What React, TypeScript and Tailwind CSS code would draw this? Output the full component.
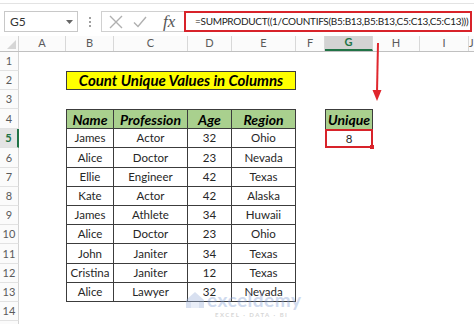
import type { FC, ReactNode } from "react";

const colW = [19, 47, 48, 74, 44, 64, 29, 48, 47, 49];
const colNames = ["A", "B", "C", "D", "E", "F", "G", "H", "I", "J"];
const rowH = [19, 19, 19, 20, 19, 20, 19, 19, 19, 19, 20, 19, 19, 19];

const head = ["Name", "Profession", "Age", "Region"];
const rows = [
  ["James", "Actor", "32", "Ohio"],
  ["Alice", "Doctor", "23", "Nevada"],
  ["Ellie", "Engineer", "42", "Texas"],
  ["Kate", "Actor", "42", "Alaska"],
  ["James", "Athlete", "34", "Huwaii"],
  ["Alice", "Doctor", "23", "Ohio"],
  ["John", "Janiter", "34", "Texas"],
  ["Cristina", "Janiter", "12", "Texas"],
  ["Alice", "Lawyer", "32", "Nevada"],
];

const formula = "=SUMPRODUCT((1/COUNTIFS(B5:B13,B5:B13,C5:C13,C5:C13)))";

const Toolbar: FC = () => (
  <div className="h-[36px] shrink-0">
    <div className="h-[4px] border-b border-[#e3e3e3]" />
    <div className="mt-[7px] flex h-[21px] items-stretch">
      <div className="ml-[4px] flex w-[74px] shrink-0 items-center justify-between border border-[#c8c8c8] pl-[5px] pr-[4px] text-[12px] text-[#333]">
        <span>G5</span>
        <svg width="7" height="4" viewBox="0 0 7 4">
          <path d="M0 0h7L3.5 4z" fill="#666" />
        </svg>
      </div>
      <div className="flex w-[23px] shrink-0 flex-col items-center justify-center gap-[2px]">
        <span className="h-[2px] w-[2px] bg-[#a0a0a0]" />
        <span className="h-[2px] w-[2px] bg-[#a0a0a0]" />
        <span className="h-[2px] w-[2px] bg-[#a0a0a0]" />
      </div>
      <div className="flex w-[83px] shrink-0 items-center border border-r-0 border-[#d0d0d0] pl-[7px]">
        <svg width="14" height="14" viewBox="0 0 14 14">
          <path d="M1 1l12 12M13 1L1 13" stroke="#b0b0b0" strokeWidth="1.4" />
        </svg>
        <svg className="ml-[10px]" width="14" height="12" viewBox="0 0 14 12">
          <path d="M1 6.5l4 4L13 1" stroke="#b0b0b0" strokeWidth="1.4" fill="none" />
        </svg>
        <span className="ml-[16px] font-['Liberation_Serif',serif] text-[17px] italic leading-none text-[#555]">
          fx
        </span>
      </div>
      <div className="mr-[2px] flex min-w-0 flex-1 items-center overflow-hidden whitespace-nowrap border-2 border-[#d8232a] pl-[9px] text-[10px] tracking-[-0.3px] text-[#222]">
        {formula}
      </div>
    </div>
  </div>
);

const ColumnHeader: FC = () => (
  <div className="flex h-[16px] shrink-0 border-b border-[#c0c0c0] bg-[#fbfbfb] text-[11px] text-[#5a5a5a]">
    <div className="relative w-[19px] shrink-0 border-r border-[#d4d4d4]">
      <svg className="absolute bottom-[2px] right-[2px]" width="9" height="9" viewBox="0 0 9 9">
        <path d="M9 0v9H0z" fill="#d6d6d6" />
      </svg>
    </div>
    {colNames.map((n, i) => {
      const sel = n === "G";
      const last = i === colNames.length - 1;
      return (
        <div
          key={n}
          style={last ? undefined : { width: colW[i + 1] ?? 0 }}
          className={
            "flex shrink-0 items-center justify-center border-r border-[#d8d8d8] " +
            (last ? "flex-1 " : "") +
            (sel ? "border-b-2 border-b-[#217346] bg-[#d3d3d3] font-bold text-[#217346]" : "")
          }
        >
          {n}
        </div>
      );
    })}
  </div>
);

const Cell: FC<{ w?: number; className?: string; children?: ReactNode }> = ({ w, className, children }) => (
  <div
    style={w ? { width: w } : undefined}
    className={"flex shrink-0 items-center justify-center " + (w ? "" : "flex-1 ") + (className ?? "")}
  >
    {children}
  </div>
);

const SheetRow: FC<{ r: number }> = ({ r }) => {
  const sel = r === 5;
  const tIdx = r - 4;
  const inTable = tIdx >= 0 && tIdx <= 9;
  const isHead = tIdx === 0;
  const values = inTable ? (isHead ? head : rows[tIdx - 1]) : null;
  const tb =
    "border-r border-b border-[#3c3c3c] " +
    (isHead ? "border-t bg-[#a9d08e] font-bold italic text-[14px] text-black" : "text-[11.5px] text-[#262626]");

  return (
    <div style={{ height: rowH[r - 1] }} className="flex shrink-0">
      <div
        className={
          "flex w-[19px] shrink-0 items-end justify-center border-b border-[#e2e2e2] pb-[1px] text-[11px] " +
          (sel
            ? "border-r-2 border-r-[#217346] bg-[#e4e4e4] font-bold text-[#217346]"
            : "border-r border-r-[#d4d4d4] bg-[#fbfbfb] text-[#5a5a5a]")
        }
      >
        {r}
      </div>
      <Cell w={colW[1]} />
      {r === 2 ? (
        <Cell
          w={colW[2] + colW[3] + colW[4] + colW[5]}
          className="border border-[#3c3c3c] bg-[#ffff00] text-[15px] font-bold italic text-black"
        >
          Count Unique Values in Columns
        </Cell>
      ) : values ? (
        values.map((v, i) => (
          <Cell key={i} w={colW[i + 2]} className={tb + (i === 0 ? " border-l" : "")}>
            {v}
          </Cell>
        ))
      ) : (
        <>
          <Cell w={colW[2]} />
          <Cell w={colW[3]} />
          <Cell w={colW[4]} />
          <Cell w={colW[5]} />
        </>
      )}
      <Cell w={colW[6]} />
      {r === 4 ? (
        <Cell
          w={colW[7]}
          className="border border-b-0 border-[#3c3c3c] bg-[#a9d08e] text-[14px] font-bold italic text-black"
        >
          Unique
        </Cell>
      ) : r === 5 ? (
        <Cell w={colW[7]} className="relative border-2 border-[#d8232a] text-[11.5px] text-[#262626]">
          8
          <span className="absolute -bottom-[3px] -right-[3px] h-[4px] w-[4px] bg-[#d8232a]" />
        </Cell>
      ) : (
        <Cell w={colW[7]} />
      )}
      <Cell w={colW[8]} />
      <Cell w={colW[9]} />
      <Cell />
    </div>
  );
};

const Watermark: FC = () => (
  <div className="pointer-events-none absolute left-[184px] top-[290px] flex flex-col items-center opacity-40">
    <div className="flex items-center">
      <svg width="22" height="18" viewBox="0 0 22 18">
        <path d="M2 9L11 1l9 8v8H2z" fill="#9fb4dc" />
        <path d="M7 17v-6h8v6" fill="#c9d6ee" />
      </svg>
      <span className="ml-[1px] text-[19px] font-bold leading-none tracking-[0.5px] text-[#8aa4d6]">
        exceldemy
      </span>
    </div>
    <span className="ml-[18px] mt-[1px] text-[6px] font-bold tracking-[1.5px] text-[#9a9a9a]">
      EXCEL · DATA · BI
    </span>
  </div>
);

const App: FC = () => (
  <div className="relative flex h-[324px] w-[474px] flex-col overflow-hidden bg-white font-['Lato','Liberation_Sans',sans-serif]">
    <Toolbar />
    <ColumnHeader />
    {rowH.map((_, i) => (
      <SheetRow key={i} r={i + 1} />
    ))}
    <div className="flex flex-1">
      <div className="w-[19px] border-r border-[#d4d4d4] bg-[#fbfbfb]" />
    </div>
    <svg className="pointer-events-none absolute left-[370px] top-[40px]" width="14" height="64" viewBox="0 0 14 64">
      <path d="M8 3L7 52" stroke="#e0262d" strokeWidth="2" />
      <path d="M2.5 50h9L7 61z" fill="#e0262d" />
    </svg>
    <Watermark />
  </div>
);

export default App;
